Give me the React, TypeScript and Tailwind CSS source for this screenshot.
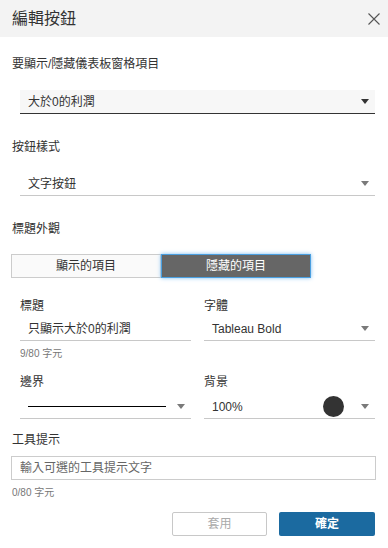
import { useState } from 'react'

function Caret({ dark = false }: { dark?: boolean }) {
  return (
    <svg width="8" height="5" viewBox="0 0 8 5" className="shrink-0">
      <path d="M0 0 H8 L4 5 Z" fill={dark ? '#333333' : '#7a7a7a'} />
    </svg>
  )
}

function Label({ children, className = '' }: { children: React.ReactNode; className?: string }) {
  return <div className={`h-4 text-[12px] leading-4 text-[#333] ${className}`}>{children}</div>
}

export default function App() {
  const [mode, setMode] = useState<'shown' | 'hidden'>('hidden')

  return (
    <div
      className="w-[388px] h-[548px] bg-white overflow-hidden"
      style={{ fontFamily: '"Liberation Sans", "Noto Sans CJK TC", sans-serif' }}
    >
      {/* header */}
      <div className="h-[37px] bg-[#f3f3f3] flex items-center justify-between pl-3 pr-2">
        <span className="text-[16px] text-[#333] leading-5">編輯按鈕</span>
        <button className="w-[13px] h-[13px] flex items-center justify-center">
          <svg width="12" height="12" viewBox="0 0 12 12">
            <path d="M0.5 0.5 L11.5 11.5 M11.5 0.5 L0.5 11.5" stroke="#555" strokeWidth="1.1" fill="none" />
          </svg>
        </button>
      </div>

      <div className="pl-3 pr-[13px]">
        <Label className="mt-[19px]">要顯示/隱藏儀表板窗格項目</Label>
        <div className="mt-[18px] ml-2 h-6 bg-[#f7f7f7] border-b border-[#333] flex items-center justify-between pl-2 pr-[6px]">
          <span className="text-[12px] text-[#333]">大於0的利潤</span>
          <Caret dark />
        </div>

        <Label className="mt-[25px]">按鈕樣式</Label>
        <div className="mt-[17px] ml-2 h-6 border-b border-[#c8c8c8] flex items-center justify-between pl-2 pr-[6px]">
          <span className="text-[12px] text-[#333]">文字按鈕</span>
          <Caret />
        </div>

        <Label className="mt-[25px]">標題外觀</Label>
        <div className="mt-[17px] -ml-px flex h-6 w-[300px]">
          <button
            onClick={() => setMode('shown')}
            className={`flex-1 text-[12px] border ${mode === 'shown' ? 'bg-[#666] text-white border-[#4a9fe0] shadow-[0_0_4px_#7dbdf0]' : 'bg-[#fafafa] text-[#333] border-[#cccccc]'}`}
          >
            顯示的項目
          </button>
          <button
            onClick={() => setMode('hidden')}
            className={`flex-1 text-[12px] border ${mode === 'hidden' ? 'bg-[#666] text-white border-[#4a9fe0] shadow-[0_0_4px_#7dbdf0]' : 'bg-[#fafafa] text-[#333] border-[#cccccc]'}`}
          >
            隱藏的項目
          </button>
        </div>

        <div className="ml-2 grid grid-cols-2 gap-x-[13px]">
          <div>
            <Label className="mt-5">標題</Label>
            <div className="mt-[3px] h-6 border-b border-[#c8c8c8] flex items-center pl-2">
              <span className="text-[12px] text-[#333]">只顯示大於0的利潤</span>
            </div>
            <div className="mt-[6px] h-[14px] text-[10px] leading-[14px] text-[#777]">9/80 字元</div>
          </div>
          <div>
            <Label className="mt-5">字體</Label>
            <div className="mt-[3px] h-6 border-b border-[#c8c8c8] flex items-center justify-between pl-2 pr-[6px]">
              <span className="text-[12px] text-[#333]">Tableau Bold</span>
              <Caret />
            </div>
          </div>

          <div>
            <Label className="mt-[13px]">邊界</Label>
            <div className="mt-[5px] h-6 border-b border-[#c8c8c8] flex items-center justify-between pl-2 pr-[6px]">
              <div className="h-[1.5px] w-[138px] bg-black" />
              <Caret />
            </div>
          </div>
          <div>
            <Label className="mt-[13px]">背景</Label>
            <div className="mt-[5px] h-6 border-b border-[#c8c8c8] flex items-center pl-2 pr-[6px]">
              <span className="text-[12px] text-[#333] flex-1">100%</span>
              <div className="w-[21px] h-[21px] rounded-full bg-[#333] mr-[17px]" />
              <Caret />
            </div>
          </div>
        </div>

        <Label className="mt-[13px]">工具提示</Label>
        <input
          className="mt-2 -ml-px w-[365px] h-6 border border-[#cccccc] px-2 text-[12px] text-[#333] placeholder-[#666] outline-none"
          placeholder="輸入可選的工具提示文字"
        />
        <div className="mt-[6px] h-[14px] text-[10px] leading-[14px] text-[#777]">0/80 字元</div>

        <div className="mt-3 flex justify-end gap-3">
          <button className="w-[95px] h-6 rounded-[2px] border border-[#c8c8c8] bg-white text-[12px] text-[#aaa]">
            套用
          </button>
          <button className="w-[96px] h-6 rounded-[2px] bg-[#1b6aa0] text-[12px] font-bold text-white">
            確定
          </button>
        </div>
      </div>
    </div>
  )
}
